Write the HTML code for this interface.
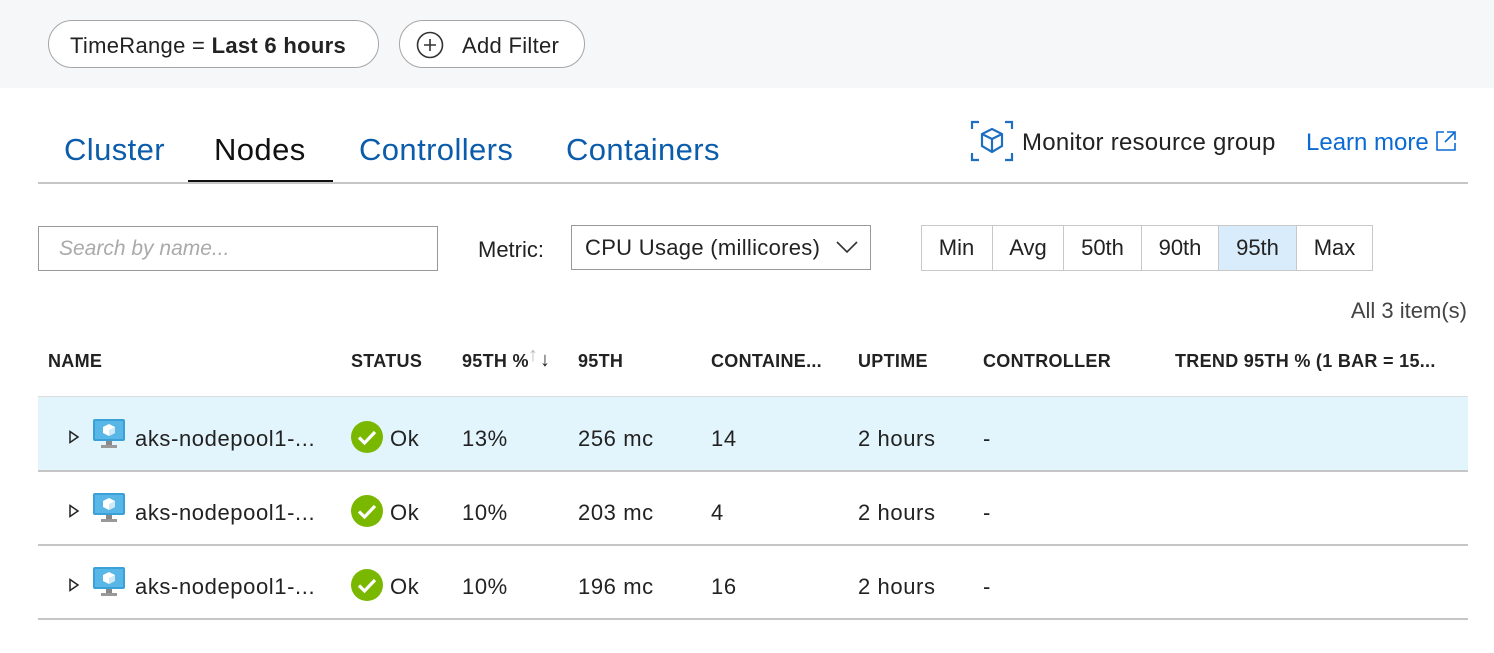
<!DOCTYPE html>
<html><head><style>
body{margin:0;width:1494px;height:653px;background:#fff;font-family:"Liberation Sans",sans-serif;color:#222;position:relative;overflow:hidden}
.abs{position:absolute;white-space:nowrap}
.top{position:absolute;left:0;top:0;width:1494px;height:88px;background:#f6f7f8}
.pill{position:absolute;top:20px;height:48px;border:1.5px solid #a6a6a6;border-radius:24px;background:#fff;box-sizing:border-box;font-size:22px;line-height:49px;letter-spacing:0.3px}
.tab{font-size:31px;color:#0b5cab;top:132px;letter-spacing:0.4px}
.hdr{font-size:18px;font-weight:bold;top:351px;color:#222;letter-spacing:0.3px}
.cell{font-size:22px;letter-spacing:0.6px}
.btn{position:absolute;top:225px;height:46px;border-right:1px solid #c8c8c8;font-size:22px;line-height:46px;text-align:center;box-sizing:border-box}
</style></head><body>
<div class="top"></div>
<div class="pill" style="left:48px;width:331px;padding-left:21px">TimeRange = <b>Last 6 hours</b></div>
<div class="pill" style="left:399px;width:186px;padding-left:62px">Add Filter
<svg class="abs" style="left:16px;top:10px" width="28" height="28"><circle cx="14" cy="14" r="12.5" fill="none" stroke="#333" stroke-width="1.6"/><path d="M14 8v12M8 14h12" stroke="#333" stroke-width="1.6"/></svg></div>

<div class="abs tab" style="left:64px">Cluster</div>
<div class="abs tab" style="left:214px;color:#111">Nodes</div>
<div class="abs tab" style="left:359px">Controllers</div>
<div class="abs tab" style="left:566px">Containers</div>
<div class="abs" style="left:188px;top:180px;width:145px;height:4px;background:#111"></div>
<div class="abs" style="left:38px;top:182px;width:1430px;height:2px;background:#c6c6c6"></div>

<svg class="abs" style="left:970px;top:120px" width="44" height="42" fill="none" stroke="#1f6fc0" stroke-width="2.2">
<path d="M2 9V2h7M35 2h7v7M42 33v7h-7M9 40H2v-7"/>
<path d="M22 9l10 5v12l-10 6l-10-6V14zM12 14l10 5l10-5M22 19v13"/></svg>
<div class="abs" style="left:1022px;top:129px;font-size:24px;letter-spacing:0.25px">Monitor resource group</div>
<div class="abs" style="left:1306px;top:129px;font-size:24px;color:#0b6bd3">Learn more</div>
<svg class="abs" style="left:1435px;top:130px" width="22" height="22" fill="none" stroke="#0b6bd3" stroke-width="1.6"><path d="M9 2H2v18h18v-7M12 2h8v8M20 2L10 12"/></svg>

<div class="abs" style="left:38px;top:226px;width:400px;height:45px;border:1.5px solid #999;box-sizing:border-box;font-size:21px;color:#aaa;font-style:italic;line-height:44px;padding-left:20px">Search by name...</div>
<div class="abs" style="left:478px;top:237px;font-size:22px">Metric:</div>
<div class="abs" style="left:571px;top:225px;width:300px;height:45px;border:1.5px solid #999;box-sizing:border-box;font-size:22px;line-height:44px;padding-left:13px;letter-spacing:0.3px">CPU Usage (millicores)
<svg class="abs" style="left:264px;top:14px" width="22" height="14" fill="none" stroke="#333" stroke-width="1.6"><path d="M1 2l10 10l10-10"/></svg></div>

<div class="abs" style="left:921px;top:225px;width:452px;height:46px;border:1px solid #c8c8c8;box-sizing:border-box"></div>
<div class="btn" style="left:921px;width:72px">Min</div>
<div class="btn" style="left:993px;width:71px">Avg</div>
<div class="btn" style="left:1064px;width:78px">50th</div>
<div class="btn" style="left:1142px;width:77px">90th</div>
<div class="btn" style="left:1219px;width:78px;background:#d8ecfb;top:226px;height:44px;line-height:44px">95th</div>
<div class="btn" style="left:1297px;width:75px;border-right:none">Max</div>

<div class="abs" style="right:27px;top:298px;font-size:22px;color:#444">All 3 item(s)</div>

<div class="abs hdr" style="left:48px">NAME</div>
<div class="abs hdr" style="left:351px">STATUS</div>
<div class="abs hdr" style="left:462px">95TH %</div>
<div class="abs" style="left:528px;top:344px;font-size:20px;color:#bbb">↑</div>
<div class="abs" style="left:540px;top:349px;font-size:20px;color:#222">↓</div>
<div class="abs hdr" style="left:578px">95TH</div>
<div class="abs hdr" style="left:711px">CONTAINE...</div>
<div class="abs hdr" style="left:858px">UPTIME</div>
<div class="abs hdr" style="left:983px">CONTROLLER</div>
<div class="abs hdr" style="left:1175px">TREND 95TH % (1 BAR = 15...</div>
<div class="abs" style="left:38px;top:396px;width:1430px;height:1px;background:#ddd"></div>

<div class="abs" style="left:38px;top:397px;width:1430px;height:73px;background:#e3f5fc"></div>
<div class="abs" style="left:38px;top:470px;width:1430px;height:2px;background:#c6c6c6"></div>
<div class="abs" style="left:38px;top:544px;width:1430px;height:2px;background:#c6c6c6"></div>
<div class="abs" style="left:38px;top:618px;width:1430px;height:2px;background:#c6c6c6"></div>

<div id="rows"></div>
<script>
var d=[["13%","256 mc","14"],["10%","203 mc","4"],["10%","196 mc","16"]],h="";
d.forEach(function(r,i){var y=425+i*74,t=y+1;
h+='<svg class="abs" style="left:68px;top:'+(y+5)+'px" width="12" height="14"><path d="M2 1.5L10 7L2 12.5Z" fill="none" stroke="#222" stroke-width="1.5"/></svg>';
h+='<svg class="abs" style="left:92px;top:'+(y-7)+'px" width="34" height="32"><rect x="1" y="1" width="32" height="22" rx="2" fill="#3aa0d8"/><rect x="3" y="3" width="28" height="18" fill="#58b7e6"/><path d="M17 6l6 3v6l-6 3l-6-3V9z" fill="#fff"/><path d="M17 12l6-3v6l-6 3z" fill="#cfe9f7"/><rect x="14" y="23" width="6" height="5" fill="#888"/><rect x="9" y="27" width="16" height="3" fill="#999"/></svg>';
h+='<div class="abs cell" style="left:135px;top:'+t+'px">aks-nodepool1-...</div>';
h+='<svg class="abs" style="left:351px;top:'+(y-4)+'px" width="32" height="32"><circle cx="16" cy="16" r="16" fill="#7ab800"/><path d="M8 16.5l5.5 5.5L24 11" fill="none" stroke="#fff" stroke-width="3.2"/></svg>';
h+='<div class="abs cell" style="left:390px;top:'+t+'px">Ok</div>';
h+='<div class="abs cell" style="left:462px;top:'+t+'px">'+r[0]+'</div>';
h+='<div class="abs cell" style="left:578px;top:'+t+'px">'+r[1]+'</div>';
h+='<div class="abs cell" style="left:711px;top:'+t+'px">'+r[2]+'</div>';
h+='<div class="abs cell" style="left:858px;top:'+t+'px">2 hours</div>';
h+='<div class="abs cell" style="left:983px;top:'+t+'px">-</div>';});
document.getElementById("rows").innerHTML=h;
</script>
</body></html>
